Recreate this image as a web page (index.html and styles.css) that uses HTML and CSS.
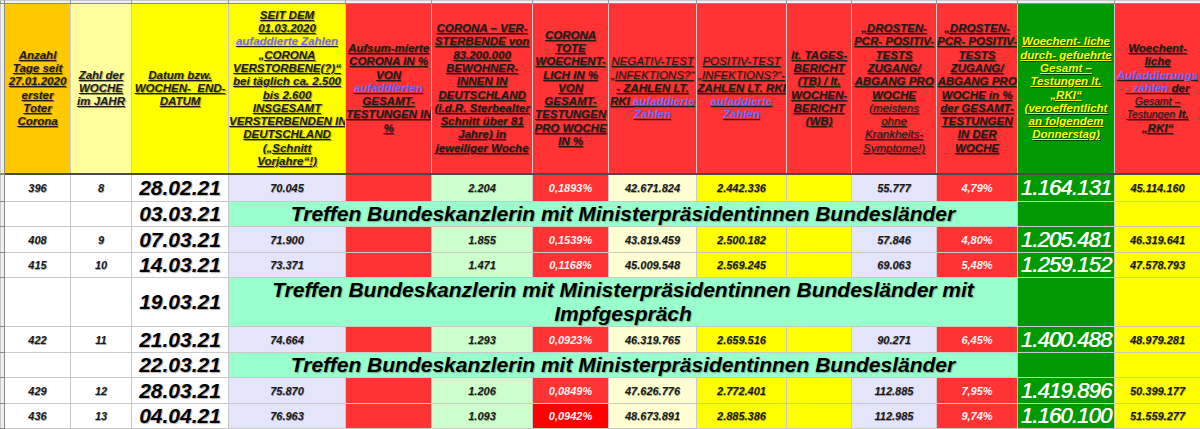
FILE: index.html
```html
<!DOCTYPE html>
<html lang="de">
<head>
<meta charset="utf-8">
<title>Tabelle</title>
<link rel="stylesheet" href="styles.css">
</head>
<body>
<table class="sheet">
<colgroup>
<col class="w0"><col class="w1"><col class="w2"><col class="w3"><col class="w4"><col class="w5"><col class="w6"><col class="w7"><col class="w8"><col class="w9"><col class="w10"><col class="w11"><col class="w12"><col class="w13"><col class="w14">
</colgroup>
<tr class="strip">
<td class="side"></td><td></td><td></td><td></td><td></td><td></td><td></td><td></td><td></td><td></td><td></td><td></td><td></td><td></td><td></td>
</tr>
<tr class="head">
<td class="side"></td>
<td class="h orange">Anzahl<br>Tage seit<br>27.01.2020<br>erster<br>Toter<br>Corona</td>
<td class="h paleyel">Zahl der<br>WOCHE<br>im JAHR</td>
<td class="h yel">Datum bzw.<br>WOCHEN-&nbsp; END-<br>DATUM</td>
<td class="h yel">SEIT DEM<br>01.03.2020<br><span class="lnk">aufaddierte Zahlen</span><br>„CORONA<br>VERSTORBENE(?)“<br>bei täglich ca. 2.500<br>bis 2.600<br>INSGESAMT<br>VERSTERBENDEN IN<br>DEUTSCHLAND<br>(„Schnitt<br>Vorjahre“!)</td>
<td class="h red">Aufsum-mierte<br>CORONA IN %<br>VON<br><span class="lnk">aufaddierten</span><br>GESAMT-<br>TESTUNGEN IN<br>%</td>
<td class="h red">CORONA – VER-<br>STERBENDE von<br>83.200.000<br>BEWOHNER-<br>INNEN IN<br>DEUTSCHLAND<br>(i.d.R. Sterbealter<br>Schnitt über 81<br>Jahre) in<br>jeweiliger Woche</td>
<td class="h red">CORONA<br>TOTE<br>WOECHENT-<br>LICH IN %<br>VON<br>GESAMT-<br>TESTUNGEN<br>PRO WOCHE<br>IN %</td>
<td class="h red"><span class="lt">NEGATIV-TEST<br>„INFEKTIONS?“</span><br>- ZAHLEN LT.<br>RKI <span class="lnk">aufaddierte</span><br><span class="lnk">Zahlen</span></td>
<td class="h red"><span class="lt">POSITIV-TEST<br>„INFEKTIONS?“-</span><br>ZAHLEN LT. RKI<br><span class="lnk">aufaddierte</span><br><span class="lnk">Zahlen</span></td>
<td class="h red">lt. TAGES-<br>BERICHT<br>(TB) / lt.<br>WOCHEN-<br>BERICHT<br>(WB)</td>
<td class="h red">„DROSTEN-<br>PCR- POSITIV-<br>TESTS<br>ZUGANG/<br>ABGANG PRO<br>WOCHE<br><span class="lt">(meistens<br>ohne<br>Krankheits-<br>Symptome!)</span></td>
<td class="h red">„DROSTEN-<br>PCR- POSITIV-<br>TESTS<br>ZUGANG/<br>ABGANG PRO<br>WOCHE in %<br>der GESAMT-<br>TESTUNGEN<br>IN DER<br>WOCHE</td>
<td class="h green hg">Woechent- liche<br>durch- gefuehrte<br>Gesamt –<br>Testungen lt.<br>„RKI“<br>(veroeffentlicht<br>an folgendem<br>Donnerstag)</td>
<td class="h red">Woechent-<br>liche<br><span class="lnk">Aufaddierungs</span><br><span class="lnk">- zahlen</span> der<br><span class="sm">Gesamt –</span><br><span class="sm">Testungen</span> lt.<br>„RKI“</td>
</tr>
<tr class="r27">
<td class="side"></td><td class="n">396</td><td class="n">8</td><td class="date">28.02.21</td><td class="n lav">70.045</td><td class="red"></td><td class="n lgreen">2.204</td><td class="n red wt">0,1893%</td><td class="n lyel">42.671.824</td><td class="n yel">2.442.336</td><td class="yel"></td><td class="n lav">55.777</td><td class="n red wt">4,79%</td><td class="big green">1.164.131</td><td class="n yel">45.114.160</td>
</tr>
<tr class="r25">
<td class="side"></td><td></td><td></td><td class="date">03.03.21</td><td class="meet" colspan="9">Treffen Bundeskanzlerin mit Ministerpräsidentinnen Bundesländer</td><td class="green"></td><td class="yel"></td>
</tr>
<tr class="r26">
<td class="side"></td><td class="n">408</td><td class="n">9</td><td class="date">07.03.21</td><td class="n lav">71.900</td><td class="red"></td><td class="n lgreen">1.855</td><td class="n red wt">0,1539%</td><td class="n lyel">43.819.459</td><td class="n yel">2.500.182</td><td class="yel"></td><td class="n lav">57.846</td><td class="n red wt">4,80%</td><td class="big green">1.205.481</td><td class="n yel">46.319.641</td>
</tr>
<tr class="r25">
<td class="side"></td><td class="n">415</td><td class="n">10</td><td class="date">14.03.21</td><td class="n lav">73.371</td><td class="red"></td><td class="n lgreen">1.471</td><td class="n red wt">0,1168%</td><td class="n lyel">45.009.548</td><td class="n yel">2.569.245</td><td class="yel"></td><td class="n lav">69.063</td><td class="n red wt">5,48%</td><td class="big green">1.259.152</td><td class="n yel">47.578.793</td>
</tr>
<tr class="r48">
<td class="side"></td><td></td><td></td><td class="date">19.03.21</td><td class="meet" colspan="9">Treffen Bundeskanzlerin mit Ministerpräsidentinnen Bundesländer mit<br>Impfgespräch</td><td class="green"></td><td class="yel"></td>
</tr>
<tr class="r26">
<td class="side"></td><td class="n">422</td><td class="n">11</td><td class="date">21.03.21</td><td class="n lav">74.664</td><td class="red"></td><td class="n lgreen">1.293</td><td class="n red wt">0,0923%</td><td class="n lyel">46.319.765</td><td class="n yel">2.659.516</td><td class="yel"></td><td class="n lav">90.271</td><td class="n red wt">6,45%</td><td class="big green">1.400.488</td><td class="n yel">48.979.281</td>
</tr>
<tr class="r25">
<td class="side"></td><td></td><td></td><td class="date">22.03.21</td><td class="meet" colspan="9">Treffen Bundeskanzlerin mit Ministerpräsidentinnen Bundesländer</td><td class="green"></td><td class="yel"></td>
</tr>
<tr class="r26">
<td class="side"></td><td class="n">429</td><td class="n">12</td><td class="date">28.03.21</td><td class="n lav">75.870</td><td class="red"></td><td class="n lgreen">1.206</td><td class="n red wt">0,0849%</td><td class="n lyel">47.626.776</td><td class="n yel">2.772.401</td><td class="yel"></td><td class="n lav">112.885</td><td class="n red wt">7,95%</td><td class="big green">1.419.896</td><td class="n yel">50.399.177</td>
</tr>
<tr class="r25">
<td class="side"></td><td class="n">436</td><td class="n">13</td><td class="date">04.04.21</td><td class="n lav">76.963</td><td class="red"></td><td class="n lgreen">1.093</td><td class="n dred wt">0,0942%</td><td class="n lyel">48.673.891</td><td class="n yel">2.885.386</td><td class="yel"></td><td class="n lav">112.985</td><td class="n red wt">9,74%</td><td class="big green">1.160.100</td><td class="n yel">51.559.277</td>
</tr>
<tr class="r25">
<td class="side"></td><td></td><td></td><td></td><td class="lav"></td><td class="red"></td><td class="lgreen"></td><td class="red"></td><td class="lyel"></td><td class="yel"></td><td class="yel"></td><td class="lav"></td><td class="red"></td><td class="green"></td><td class="yel"></td>
</tr>
</table>
</body>
</html>
```

FILE: styles.css
```css
html, body {
  margin: 0;
  padding: 0;
  background: #ffffff;
  overflow: hidden;
}
body {
  font-family: "Liberation Sans", Arial, sans-serif;
  color: #000;
}
.sheet {
  border-collapse: collapse;
  table-layout: fixed;
  width: 1200px;
}
.w0 { width: 4px; }
.w1 { width: 66px; }
.w2 { width: 61px; }
.w3 { width: 97px; }
.w4 { width: 117px; }
.w5 { width: 86px; }
.w6 { width: 101px; }
.w7 { width: 76px; }
.w8 { width: 88px; }
.w9 { width: 90px; }
.w10 { width: 65px; }
.w11 { width: 85px; }
.w12 { width: 81px; }
.w13 { width: 97px; }
.w14 { width: 86px; }

.sheet td {
  border: 1px solid #c9c9c9;
  padding: 0;
  text-align: center;
  vertical-align: middle;
  overflow: hidden;
  white-space: nowrap;
  font-weight: bold;
  font-style: italic;
  line-height: 18px;
}
.sheet td.side {
  background: #efefef;
  border-right-color: #8a8a8a;
  border-bottom-color: #8a8a8a;
}
.strip td {
  height: 2px;
  background: #f1f1f1;
  border-bottom: 1px solid #8a8a8a;
  border-left-color: #9a9a9a;
  border-right-color: #9a9a9a;
  line-height: 0;
  font-size: 0;
}
.head td {
  height: 169px;
  border-bottom: 2px solid #4a4a4a;
}
.sheet td.h {
  font-size: 11.5px;
  line-height: 13.3px;
  color: #1c1c1c;
  text-decoration: underline;
  text-shadow: 1px 1px 1px rgba(0, 0, 0, 0.4);
}
.h .lnk {
  color: #6f6cff;
  text-shadow: 1px 1px 1px rgba(0, 0, 0, 0.2);
}
.h .lt {
  font-weight: normal;
}
.h .sm {
  font-size: 10.5px;
  font-weight: normal;
}
.sheet td.hg {
  color: #ffff00;
  text-shadow: 1px 1px 1px rgba(0, 0, 0, 0.55);
}

.orange { background: #ffc800; }
.paleyel { background: #ffff9e; }
.yel { background: #ffff00; }
.red { background: #ff3333; }
.dred { background: #ff0000; }
.green { background: #009900; }
.lav { background: #e4e4fb; }
.lgreen { background: #ccffcc; }
.lyel { background: #ffffd2; }

.r27 td { height: 26px; }
.r25 td { height: 24px; }
.r26 td { height: 25px; }
.r48 td { height: 47px; }

.n {
  font-size: 11px;
  color: #1a1a1a;
  text-shadow: 0.5px 0.5px 0.5px rgba(0, 0, 0, 0.35);
}
.wt {
  color: #fff2f2;
  text-shadow: none;
}
.sheet td.date {
  font-size: 21px;
  line-height: 20px;
  color: #000;
  text-shadow: 1px 1px 1px rgba(0, 0, 0, 0.3);
}
.sheet td.big {
  font-size: 22px;
  line-height: 20px;
  letter-spacing: -0.8px;
  color: #ffffff;
  font-weight: normal;
  text-shadow: 0.6px 0 0 #ffffff;
}
.sheet td.meet {
  background: #99ffcc;
  font-size: 21px;
  line-height: 24px;
  color: #000;
  text-shadow: 1px 1px 1px rgba(0, 0, 0, 0.3);
}
```
